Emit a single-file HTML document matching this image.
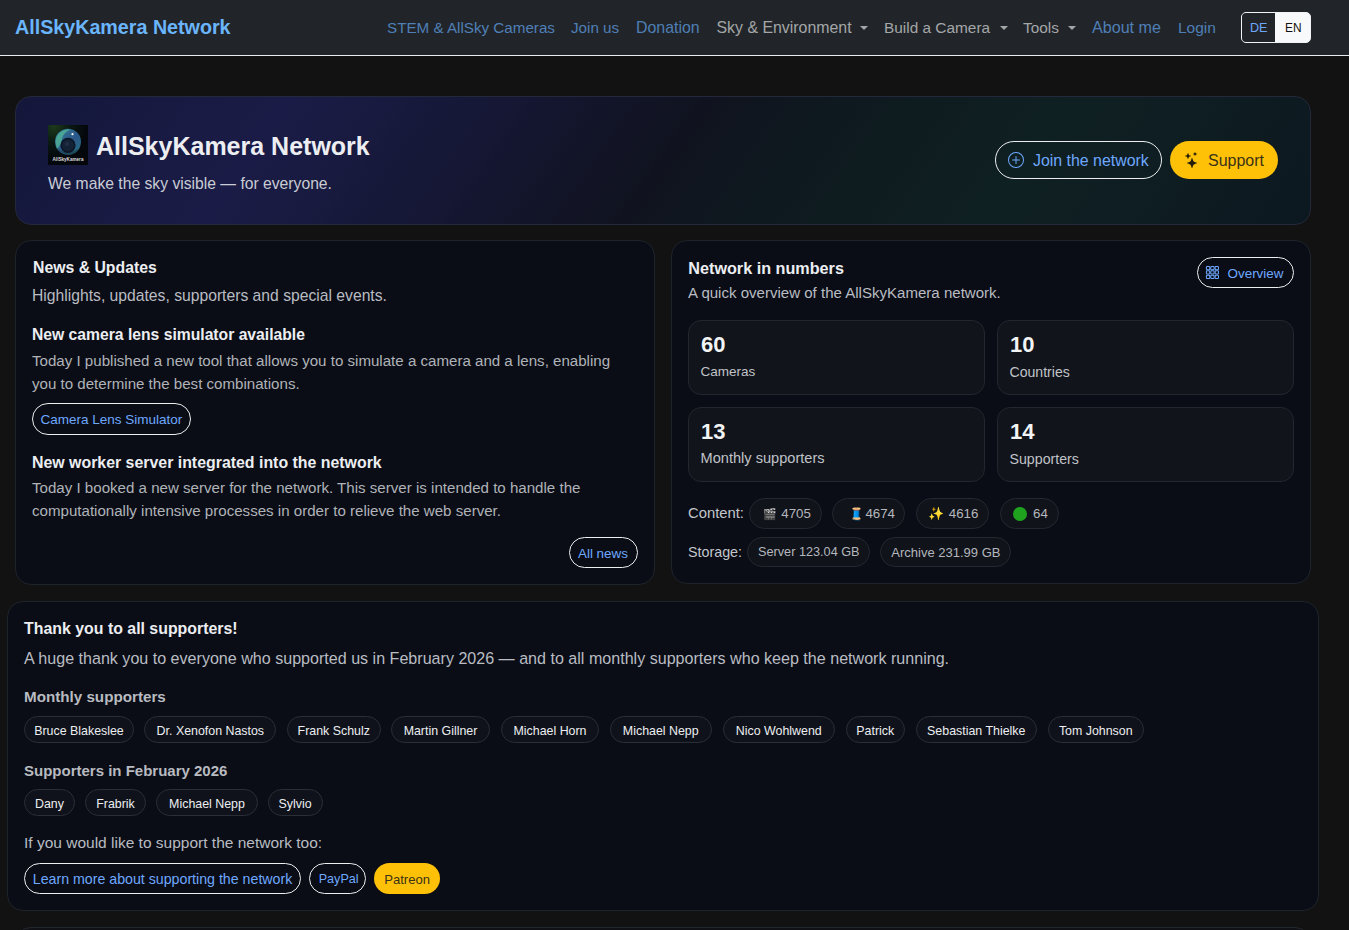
<!DOCTYPE html>
<html><head><meta charset="utf-8"><title>AllSkyKamera Network</title><style>
*{margin:0;padding:0;box-sizing:border-box}
html,body{width:1349px;height:930px;overflow:hidden;background:#121212;font-family:"Liberation Sans",sans-serif}
.t{position:absolute;white-space:nowrap;line-height:1}
.b{position:absolute}
</style></head>
<body>
<div class="b" style="left:0px;top:0px;width:1349px;height:55px;background:#212529"></div>
<div class="b" style="left:0px;top:55px;width:1349px;height:1px;background:#e9ebee"></div>
<div class="t" style="left:15.00px;top:18.42px;font-size:19.7px;color:#6ab5fb;font-weight:700;">AllSkyKamera Network</div>
<div class="t" style="left:387.00px;top:20.13px;font-size:15.2px;color:#4f7fb6;font-weight:400;">STEM &amp; AllSky Cameras</div>
<div class="t" style="left:571.00px;top:20.13px;font-size:15.2px;color:#4f7fb6;font-weight:400;">Join us</div>
<div class="t" style="left:636.00px;top:19.54px;font-size:15.9px;color:#4f7fb6;font-weight:400;">Donation</div>
<div class="t" style="left:716.50px;top:19.54px;font-size:15.9px;color:#a4a6a8;font-weight:400;">Sky &amp; Environment</div>
<div class="t" style="left:884.00px;top:19.96px;font-size:15.4px;color:#a4a6a8;font-weight:400;">Build a Camera</div>
<div class="t" style="left:1023.00px;top:19.96px;font-size:15.4px;color:#a4a6a8;font-weight:400;">Tools</div>
<div class="t" style="left:1092.00px;top:19.37px;font-size:16.1px;color:#4f7fb6;font-weight:400;">About me</div>
<div class="t" style="left:1178.00px;top:19.88px;font-size:15.5px;color:#4f7fb6;font-weight:400;">Login</div>
<div class="b" style="left:860px;top:25.5px;width:0;height:0;border-top:4.5px solid #a4a6a8;border-left:4px solid transparent;border-right:4px solid transparent"></div>
<div class="b" style="left:999.5px;top:25.5px;width:0;height:0;border-top:4.5px solid #a4a6a8;border-left:4px solid transparent;border-right:4px solid transparent"></div>
<div class="b" style="left:1068px;top:25.5px;width:0;height:0;border-top:4.5px solid #a4a6a8;border-left:4px solid transparent;border-right:4px solid transparent"></div>
<div class="b" style="left:1241px;top:12px;width:70px;height:31px;border:1px solid #f1f3f5;border-radius:5px;overflow:hidden;background:#f8f9fa"></div>
<div class="b" style="left:1242px;top:13px;width:33px;height:29px;background:#212529;border-radius:4px 0 0 4px"></div>
<div class="t" style="left:1250.00px;top:22.03px;font-size:12.6px;color:#6ea8fe;font-weight:400;">DE</div>
<div class="t" style="left:1285.00px;top:22.63px;font-size:11.9px;color:#111;font-weight:400;">EN</div>
<div class="b" style="left:15px;top:96px;width:1296px;height:129px;border:1px solid #23283a;border-radius:16px;background:linear-gradient(125deg,#14173a 0%,#1a1c47 20%,#151734 36%,#10131f 50%,#0e1a1f 62%,#0f2022 76%,#0e1d22 88%,#0c1820 100%)"></div>
<svg class="b" style="left:48px;top:125px" width="40" height="40" viewBox="0 0 40 40">
<defs>
<radialGradient id="bgg" cx="15%" cy="5%" r="80%"><stop offset="0" stop-color="#1c3a1c"/><stop offset=".5" stop-color="#0a1812"/><stop offset="1" stop-color="#04080c"/></radialGradient>
<linearGradient id="sky" x1="0" y1="0" x2="1" y2="1"><stop offset="0" stop-color="#3a8aa0"/><stop offset=".55" stop-color="#2f5f98"/><stop offset="1" stop-color="#2a7a88"/></linearGradient>
</defs>
<rect width="40" height="40" fill="url(#bgg)"/>
<circle cx="20" cy="16.8" r="13" fill="url(#sky)" opacity=".9"/>
<path d="M8 20 Q6 11 14 6 Q20 3.5 22 4.5 Q15 8 14 14 Q13 20 9 24Z" fill="#52b898" opacity=".75"/>
<path d="M8 22 Q12 28 20 30 Q28 29.5 32 23 Q26 27 20 27 Q12 27 8 22Z" fill="#1a4450" opacity=".8"/>
<circle cx="20" cy="20.3" r="6.8" fill="#142236" stroke="#0c1626" stroke-width="1.6"/>
<circle cx="19" cy="19" r="2" fill="#2a3448" opacity=".7"/>
<circle cx="24.5" cy="9.2" r="1.1" fill="#fff"/>
<text x="20" y="36.2" font-size="4.6" font-family="Liberation Sans" font-weight="700" fill="#dcdcdc" text-anchor="middle">AllSkyKamera</text>
</svg>
<div class="t" style="left:96.00px;top:134.34px;font-size:25px;color:#eceef2;font-weight:700;">AllSkyKamera Network</div>
<div class="t" style="left:48.00px;top:175.51px;font-size:15.7px;color:#c9ccd4;font-weight:400;">We make the sky visible — for everyone.</div>
<div class="b" style="left:995px;top:141px;width:167px;height:38px;border:1px solid #eceef0;border-radius:19px"></div>
<div class="t" style="left:1033.00px;top:153.14px;font-size:15.9px;color:#6ea8fe;font-weight:400;">Join the network</div>
<svg class="b" style="left:1008px;top:152px" width="16" height="16" viewBox="0 0 16 16" fill="#6ea8fe"><path d="M8 15A7 7 0 1 1 8 1a7 7 0 0 1 0 14m0 1A8 8 0 1 0 8 0a8 8 0 0 0 0 16"/><path d="M8 4a.5.5 0 0 1 .5.5v3h3a.5.5 0 0 1 0 1h-3v3a.5.5 0 0 1-1 0v-3h-3a.5.5 0 0 1 0-1h3v-3A.5.5 0 0 1 8 4"/></svg>
<div class="b" style="left:1170px;top:141px;width:108px;height:38px;background:#ffc107;border-radius:19px"></div>
<div class="t" style="left:1208.00px;top:153.06px;font-size:16px;color:#3b3218;font-weight:400;">Support</div>
<svg class="b" style="left:1184px;top:152px" width="16" height="16" viewBox="0 0 16 16" fill="#231c08"><path d="M7.657 6.247c.11-.33.576-.33.686 0l.645 1.937a2.89 2.89 0 0 0 1.829 1.828l1.936.645c.33.11.33.576 0 .686l-1.937.645a2.89 2.89 0 0 0-1.828 1.829l-.645 1.936a.361.361 0 0 1-.686 0l-.645-1.937a2.89 2.89 0 0 0-1.828-1.828l-1.937-.645a.361.361 0 0 1 0-.686l1.937-.645a2.89 2.89 0 0 0 1.828-1.828zM3.794 1.148a.217.217 0 0 1 .412 0l.387 1.162c.173.518.579.924 1.097 1.097l1.162.387a.217.217 0 0 1 0 .412l-1.162.387A1.730 1.730 0 0 0 4.593 5.690l-.387 1.162a.217.217 0 0 1-.412 0L3.407 5.690A1.730 1.730 0 0 0 2.310 4.593l-1.162-.387a.217.217 0 0 1 0-.412l1.162-.387A1.730 1.730 0 0 0 3.407 2.310zM10.863.099a.145.145 0 0 1 .274 0l.258.774c.115.346.386.617.732.732l.774.258a.145.145 0 0 1 0 .274l-.774.258a1.160 1.160 0 0 0-.732.732l-.258.774a.145.145 0 0 1-.274 0l-.258-.774a1.160 1.160 0 0 0-.732-.732L9.100 2.137a.145.145 0 0 1 0-.274l.774-.258c.346-.115.617-.386.732-.732z"/></svg>
<div class="b" style="left:15px;top:240px;width:640px;height:345px;border:1px solid #1f232b;border-radius:16px;background:#0a0d16"></div>
<div class="t" style="left:33.00px;top:259.93px;font-size:15.8px;color:#eceef1;font-weight:700;">News &amp; Updates</div>
<div class="t" style="left:32.00px;top:287.81px;font-size:15.7px;color:#b9bcc2;font-weight:400;">Highlights, updates, supporters and special events.</div>
<div class="t" style="left:32.00px;top:327.41px;font-size:15.7px;color:#eceef1;font-weight:700;">New camera lens simulator available</div>
<div class="t" style="left:32.00px;top:353.22px;font-size:15.1px;color:#b0b3b8;font-weight:400;">Today I published a new tool that allows you to simulate a camera and a lens, enabling</div>
<div class="t" style="left:32.00px;top:376.22px;font-size:15.1px;color:#b0b3b8;font-weight:400;">you to determine the best combinations.</div>
<div class="b" style="left:32px;top:403px;width:159px;height:32px;border:1px solid #eceef0;border-radius:16px"></div>
<div class="t" style="left:40.50px;top:413.07px;font-size:13.5px;color:#6ea8fe;font-weight:400;">Camera Lens Simulator</div>
<div class="t" style="left:32.00px;top:454.54px;font-size:15.9px;color:#eceef1;font-weight:700;">New worker server integrated into the network</div>
<div class="t" style="left:32.00px;top:480.02px;font-size:15.1px;color:#b0b3b8;font-weight:400;">Today I booked a new server for the network. This server is intended to handle the</div>
<div class="t" style="left:32.00px;top:502.92px;font-size:15.1px;color:#b0b3b8;font-weight:400;">computationally intensive processes in order to relieve the web server.</div>
<div class="b" style="left:569px;top:537px;width:69px;height:31px;border:1px solid #eceef0;border-radius:16px"></div>
<div class="t" style="left:578.00px;top:546.66px;font-size:13.4px;color:#6ea8fe;font-weight:400;">All news</div>
<div class="b" style="left:671px;top:240px;width:640px;height:344px;border:1px solid #1f232b;border-radius:16px;background:#0a0d16"></div>
<div class="t" style="left:688.30px;top:259.99px;font-size:16.2px;color:#eceef1;font-weight:700;">Network in numbers</div>
<div class="t" style="left:688.00px;top:285.35px;font-size:15.06px;color:#b9bcc2;font-weight:400;">A quick overview of the AllSkyKamera network.</div>
<div class="b" style="left:1197px;top:257px;width:97px;height:31px;border:1px solid #eceef0;border-radius:16px"></div>
<div class="t" style="left:1227.60px;top:266.66px;font-size:13.4px;color:#6ea8fe;font-weight:400;">Overview</div>
<svg class="b" style="left:1205px;top:265px" width="14" height="14" viewBox="0 0 16 16" fill="none" stroke="#6ea8fe" stroke-width="1.15"><rect x="1.6" y="1.6" width="3.8" height="3.8" rx="0.9"/><rect x="1.6" y="6.6" width="3.8" height="3.8" rx="0.9"/><rect x="1.6" y="11.6" width="3.8" height="3.8" rx="0.9"/><rect x="6.6" y="1.6" width="3.8" height="3.8" rx="0.9"/><rect x="6.6" y="6.6" width="3.8" height="3.8" rx="0.9"/><rect x="6.6" y="11.6" width="3.8" height="3.8" rx="0.9"/><rect x="11.6" y="1.6" width="3.8" height="3.8" rx="0.9"/><rect x="11.6" y="6.6" width="3.8" height="3.8" rx="0.9"/><rect x="11.6" y="11.6" width="3.8" height="3.8" rx="0.9"/></svg>
<div class="b" style="left:688px;top:320px;width:297px;height:75px;border:1px solid #22262e;border-radius:13px;background:#11141b"></div>
<div class="t" style="left:701.00px;top:333.88px;font-size:22px;color:#f1f3f5;font-weight:700;">60</div>
<div class="t" style="left:700.50px;top:365.17px;font-size:13.5px;color:#c0c3c8;font-weight:400;">Cameras</div>
<div class="b" style="left:997px;top:320px;width:297px;height:75px;border:1px solid #22262e;border-radius:13px;background:#11141b"></div>
<div class="t" style="left:1010.00px;top:333.88px;font-size:22px;color:#f1f3f5;font-weight:700;">10</div>
<div class="t" style="left:1009.50px;top:364.66px;font-size:14.1px;color:#c0c3c8;font-weight:400;">Countries</div>
<div class="b" style="left:688px;top:407px;width:297px;height:75px;border:1px solid #22262e;border-radius:13px;background:#11141b"></div>
<div class="t" style="left:701.00px;top:420.88px;font-size:22px;color:#f1f3f5;font-weight:700;">13</div>
<div class="t" style="left:700.50px;top:451.24px;font-size:14.6px;color:#c0c3c8;font-weight:400;">Monthly supporters</div>
<div class="b" style="left:997px;top:407px;width:297px;height:75px;border:1px solid #22262e;border-radius:13px;background:#11141b"></div>
<div class="t" style="left:1010.00px;top:420.88px;font-size:22px;color:#f1f3f5;font-weight:700;">14</div>
<div class="t" style="left:1009.50px;top:451.58px;font-size:14.2px;color:#c0c3c8;font-weight:400;">Supporters</div>
<div class="t" style="left:688.00px;top:505.97px;font-size:14.8px;color:#c3c6cc;font-weight:400;">Content:</div>
<div class="b" style="left:749px;top:498px;width:73px;height:31px;border:1px solid #23272f;border-radius:16px;background:#10131a"></div>
<div class="t" style="left:781.30px;top:507.24px;font-size:13.3px;color:#b4b7bd;font-weight:400;">4705</div>
<div class="b" style="left:832px;top:498px;width:73px;height:31px;border:1px solid #23272f;border-radius:16px;background:#10131a"></div>
<div class="t" style="left:865.40px;top:507.24px;font-size:13.3px;color:#b4b7bd;font-weight:400;">4674</div>
<div class="b" style="left:916px;top:498px;width:73px;height:31px;border:1px solid #23272f;border-radius:16px;background:#10131a"></div>
<div class="t" style="left:948.80px;top:507.24px;font-size:13.3px;color:#b4b7bd;font-weight:400;">4616</div>
<div class="b" style="left:1000px;top:498px;width:59px;height:31px;border:1px solid #23272f;border-radius:16px;background:#10131a"></div>
<div class="t" style="left:1033.00px;top:507.24px;font-size:13.3px;color:#b4b7bd;font-weight:400;">64</div>
<div class="t" style="left:763.00px;top:508.69px;font-size:11px;color:#fff;font-weight:400;">&#127916;</div>
<div class="t" style="left:848.50px;top:508.34px;font-size:12px;color:#fff;font-weight:400;">&#129525;</div>
<div class="t" style="left:928.00px;top:507.00px;font-size:13px;color:#fff;font-weight:400;">&#10024;</div>
<div class="b" style="left:1012.5px;top:506.5px;width:14px;height:14px;border-radius:50%;background:#1fa31f"></div>
<div class="t" style="left:688.00px;top:545.40px;font-size:14.3px;color:#c3c6cc;font-weight:400;">Storage:</div>
<div class="b" style="left:747px;top:537px;width:123px;height:30px;border:1px solid #23272f;border-radius:16px;background:#10131a"></div>
<div class="t" style="left:758.00px;top:546.25px;font-size:12.7px;color:#b4b7bd;font-weight:400;">Server 123.04 GB</div>
<div class="b" style="left:880px;top:537px;width:131px;height:30px;border:1px solid #23272f;border-radius:16px;background:#10131a"></div>
<div class="t" style="left:891.30px;top:546.00px;font-size:13px;color:#b4b7bd;font-weight:400;">Archive 231.99 GB</div>
<div class="b" style="left:7px;top:601px;width:1312px;height:310px;border:1px solid #1f232b;border-radius:16px;background:#0a0d16"></div>
<div class="t" style="left:24.00px;top:621.04px;font-size:15.9px;color:#eceef1;font-weight:700;">Thank you to all supporters!</div>
<div class="t" style="left:24.00px;top:649.79px;font-size:16.08px;color:#b9bcc2;font-weight:400;">A huge thank you to everyone who supported us in February 2026 — and to all monthly supporters who keep the network running.</div>
<div class="t" style="left:24.00px;top:689.43px;font-size:15.2px;color:#b8bbc0;font-weight:700;">Monthly supporters</div>
<div class="b" style="left:24px;top:716px;width:110px;height:27px;border:1px solid #2a2e36;border-radius:14px;background:#0f121a"></div>
<div class="t" style="left:24px;width:110px;text-align:center;top:724.50px;font-size:12.4px;color:#eceef1">Bruce Blakeslee</div>
<div class="b" style="left:144.4px;top:716px;width:131.9px;height:27px;border:1px solid #2a2e36;border-radius:14px;background:#0f121a"></div>
<div class="t" style="left:144.4px;width:131.9px;text-align:center;top:724.50px;font-size:12.4px;color:#eceef1">Dr. Xenofon Nastos</div>
<div class="b" style="left:287px;top:716px;width:93.5px;height:27px;border:1px solid #2a2e36;border-radius:14px;background:#0f121a"></div>
<div class="t" style="left:287px;width:93.5px;text-align:center;top:724.50px;font-size:12.4px;color:#eceef1">Frank Schulz</div>
<div class="b" style="left:391px;top:716px;width:99px;height:27px;border:1px solid #2a2e36;border-radius:14px;background:#0f121a"></div>
<div class="t" style="left:391px;width:99px;text-align:center;top:724.50px;font-size:12.4px;color:#eceef1">Martin Gillner</div>
<div class="b" style="left:501px;top:716px;width:98px;height:27px;border:1px solid #2a2e36;border-radius:14px;background:#0f121a"></div>
<div class="t" style="left:501px;width:98px;text-align:center;top:724.50px;font-size:12.4px;color:#eceef1">Michael Horn</div>
<div class="b" style="left:610px;top:716px;width:101.5px;height:27px;border:1px solid #2a2e36;border-radius:14px;background:#0f121a"></div>
<div class="t" style="left:610px;width:101.5px;text-align:center;top:724.50px;font-size:12.4px;color:#eceef1">Michael Nepp</div>
<div class="b" style="left:722.5px;top:716px;width:112.5px;height:27px;border:1px solid #2a2e36;border-radius:14px;background:#0f121a"></div>
<div class="t" style="left:722.5px;width:112.5px;text-align:center;top:724.50px;font-size:12.4px;color:#eceef1">Nico Wohlwend</div>
<div class="b" style="left:845.5px;top:716px;width:59.5px;height:27px;border:1px solid #2a2e36;border-radius:14px;background:#0f121a"></div>
<div class="t" style="left:845.5px;width:59.5px;text-align:center;top:724.50px;font-size:12.4px;color:#eceef1">Patrick</div>
<div class="b" style="left:915.5px;top:716px;width:121.5px;height:27px;border:1px solid #2a2e36;border-radius:14px;background:#0f121a"></div>
<div class="t" style="left:915.5px;width:121.5px;text-align:center;top:724.50px;font-size:12.4px;color:#eceef1">Sebastian Thielke</div>
<div class="b" style="left:1047.5px;top:716px;width:96.5px;height:27px;border:1px solid #2a2e36;border-radius:14px;background:#0f121a"></div>
<div class="t" style="left:1047.5px;width:96.5px;text-align:center;top:724.50px;font-size:12.4px;color:#eceef1">Tom Johnson</div>
<div class="t" style="left:24.00px;top:763.40px;font-size:15px;color:#b8bbc0;font-weight:700;">Supporters in February 2026</div>
<div class="b" style="left:24px;top:789px;width:51px;height:27px;border:1px solid #2a2e36;border-radius:14px;background:#0f121a"></div>
<div class="t" style="left:24px;width:51px;text-align:center;top:797.60px;font-size:12.4px;color:#eceef1">Dany</div>
<div class="b" style="left:85px;top:789px;width:61px;height:27px;border:1px solid #2a2e36;border-radius:14px;background:#0f121a"></div>
<div class="t" style="left:85px;width:61px;text-align:center;top:797.60px;font-size:12.4px;color:#eceef1">Frabrik</div>
<div class="b" style="left:156px;top:789px;width:102px;height:27px;border:1px solid #2a2e36;border-radius:14px;background:#0f121a"></div>
<div class="t" style="left:156px;width:102px;text-align:center;top:797.60px;font-size:12.4px;color:#eceef1">Michael Nepp</div>
<div class="b" style="left:267.6px;top:789px;width:55.0px;height:27px;border:1px solid #2a2e36;border-radius:14px;background:#0f121a"></div>
<div class="t" style="left:267.6px;width:55.0px;text-align:center;top:797.60px;font-size:12.4px;color:#eceef1">Sylvio</div>
<div class="t" style="left:24.00px;top:835.28px;font-size:15.5px;color:#b9bcc2;font-weight:400;">If you would like to support the network too:</div>
<div class="b" style="left:24px;top:863px;width:277px;height:31px;border:1px solid #eceef0;border-radius:16px"></div>
<div class="t" style="left:32.80px;top:871.98px;font-size:14.2px;color:#6ea8fe;font-weight:400;">Learn more about supporting the network</div>
<div class="b" style="left:309px;top:863px;width:57px;height:31px;border:1px solid #eceef0;border-radius:16px"></div>
<div class="t" style="left:318.70px;top:873.33px;font-size:12.6px;color:#6ea8fe;font-weight:400;">PayPal</div>
<div class="b" style="left:374px;top:863px;width:66px;height:31px;background:#ffc107;border-radius:16px"></div>
<div class="t" style="left:384.20px;top:872.91px;font-size:13.1px;color:#3b3218;font-weight:400;">Patreon</div>
<div class="b" style="left:15px;top:927px;width:1296px;height:33px;border:1px solid #23272e;border-radius:16px;background:#0f1116"></div>

</body></html>
